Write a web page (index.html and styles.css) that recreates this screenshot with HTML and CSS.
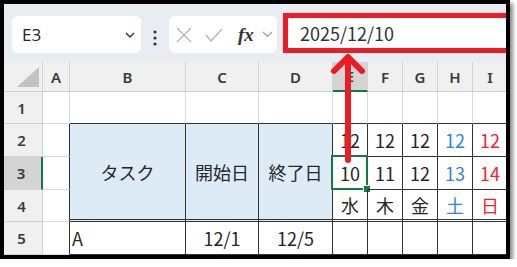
FILE: index.html
```html
<!DOCTYPE html>
<html lang="ja">
<head>
<meta charset="utf-8">
<link rel="stylesheet" href="styles.css">
</head>
<body>
<div class="frame">
  <div class="toolbar">
    <div class="namebox">
      <span class="ref">E3</span>
      <svg class="chev" width="10" height="6" viewBox="0 0 10 6"><polyline points="1,1 5,5 9,1" fill="none" stroke="#333" stroke-width="1.4"/></svg>
    </div>
    <svg class="dots" width="6" height="16" viewBox="0 0 6 16"><circle cx="3" cy="2" r="1.6" fill="#333"/><circle cx="3" cy="8" r="1.6" fill="#333"/><circle cx="3" cy="14" r="1.6" fill="#333"/></svg>
    <div class="fxbox">
      <svg class="ic" width="16" height="16" viewBox="0 0 16 16"><path d="M1 1 L15 15 M15 1 L1 15" stroke="#b4b4b4" stroke-width="1.3" fill="none"/></svg>
      <svg class="ic" width="18" height="16" viewBox="0 0 18 16"><polyline points="1,8 6,14 17,2" stroke="#b4b4b4" stroke-width="1.3" fill="none"/></svg>
      <span class="fx">fx</span>
      <svg class="chev2" width="11" height="7" viewBox="0 0 11 7"><polyline points="1,1 5.5,5.5 10,1" fill="none" stroke="#9a9a9a" stroke-width="1.2"/></svg>
    </div>
    <div class="formula">2025/12/10</div>
  </div>

  <div class="sheet">
    <div class="ch corner"><svg width="22" height="20" viewBox="0 0 22 20"><polygon points="0,20 22,20 22,0" fill="#c2c2c2"/></svg></div>
    <div class="ch">A</div>
    <div class="ch">B</div>
    <div class="ch">C</div>
    <div class="ch">D</div>
    <div class="ch selh">E</div>
    <div class="ch">F</div>
    <div class="ch">G</div>
    <div class="ch">H</div>
    <div class="ch">I</div>

    <div class="rh">1</div>
    <div class="c"></div>
    <div class="c top"></div>
    <div class="c top"></div>
    <div class="c top"></div>
    <div class="c top"></div>
    <div class="c top"></div>
    <div class="c top"></div>
    <div class="c top"></div>
    <div class="c top"></div>

    <div class="rh">2</div>
    <div class="c lft"></div>
    <div class="c t fill merge dbl">タスク</div>
    <div class="c t fill merge dbl">開始日</div>
    <div class="c t fill merge dbl">終了日</div>
    <div class="c t">12</div>
    <div class="c t">12</div>
    <div class="c t">12</div>
    <div class="c t sat">12</div>
    <div class="c t sun">12</div>

    <div class="rh selr">3</div>
    <div class="c lft"></div>
    <div class="c t active">10<span class="sel"><span class="handle"></span></span></div>
    <div class="c t">11</div>
    <div class="c t">12</div>
    <div class="c t sat">13</div>
    <div class="c t sun">14</div>

    <div class="rh">4</div>
    <div class="c lft"></div>
    <div class="c t dbl">水</div>
    <div class="c t dbl">木</div>
    <div class="c t dbl">金</div>
    <div class="c t dbl sat">土</div>
    <div class="c t dbl sun">日</div>

    <div class="rh">5</div>
    <div class="c lft"></div>
    <div class="c t left">A</div>
    <div class="c t">12/1</div>
    <div class="c t">12/5</div>
    <div class="c t"></div>
    <div class="c t"></div>
    <div class="c t"></div>
    <div class="c t"></div>
    <div class="c t"></div>
  </div>

  <svg class="arrow" width="502" height="251" viewBox="0 0 502 251">
    <g stroke="#ec1c24" stroke-width="6" stroke-linecap="round" stroke-linejoin="round" fill="none">
      <polyline points="330,67 344,53 358,67"/>
      <line x1="344" y1="55" x2="344" y2="156"/>
    </g>
  </svg>
</div>
</body>
</html>
```

FILE: styles.css
```css
html, body {
  margin: 0;
  padding: 0;
  background: #ffffff;
}

.frame {
  position: relative;
  width: 510px;
  height: 259px;
  box-sizing: border-box;
  border: 4px solid #000;
  box-shadow: 3px 3px 4px rgba(0, 0, 0, 0.45);
  overflow: hidden;
  background: #e9edf2;
}

.toolbar {
  height: 58px;
  box-sizing: border-box;
  display: flex;
  align-items: flex-start;
  padding: 9px 0 0 8px;
  white-space: nowrap;
}

.namebox {
  margin-top: 3px;
  width: 129px;
  height: 37px;
  box-sizing: border-box;
  background: #fff;
  border-radius: 6px;
  display: flex;
  align-items: center;
  justify-content: space-between;
  padding: 0 6px 0 10px;
  flex: none;
}

.ref {
  font-family: "Open Sans", "Noto Sans", sans-serif;
  font-size: 17px;
  color: #222;
}

.dots {
  margin: 17px 11px 0 11px;
  flex: none;
}

.fxbox {
  margin-top: 3px;
  width: 108px;
  height: 37px;
  box-sizing: border-box;
  background: #fff;
  border-radius: 6px;
  display: flex;
  align-items: center;
  padding: 0 0 0 7px;
  flex: none;
}

.fxbox .ic {
  margin-right: 13px;
}

.fx {
  font-family: "Liberation Serif", "DejaVu Serif", serif;
  font-style: italic;
  font-weight: bold;
  font-size: 19px;
  color: #333;
  margin-left: 2px;
}

.chev2 {
  margin-left: 8px;
}

.formula {
  margin-left: 6px;
  width: 260px;
  height: 40px;
  box-sizing: border-box;
  border: 5px solid #ec1c24;
  background: #fff;
  padding-left: 12px;
  font-family: "Noto Sans CJK JP", "Noto Sans", sans-serif;
  font-size: 18px;
  line-height: 30px;
  color: #333;
  flex: none;
}

.sheet {
  display: grid;
  grid-template-columns: 39px 27px 116px 73px 74px repeat(5, 35px);
  grid-template-rows: 30px 32px 33px 33px 32px 33px;
  width: 504px;
  background: #fff;
}

.sheet > div {
  box-sizing: border-box;
  display: flex;
  align-items: center;
  justify-content: center;
}

.ch,
.rh {
  background: #f0f0f0;
  border-right: 1px solid #d4d4d4;
  border-bottom: 1px solid #d0d0d0;
  font-family: "Noto Sans", "Open Sans", sans-serif;
  font-weight: 600;
  font-size: 15px;
  color: #3a3a3a;
}

.rh {
  padding-right: 3px;
}

.corner {
  justify-content: flex-end !important;
  align-items: flex-end !important;
  padding: 0 3px 4px 0;
}

.corner svg {
  display: block;
}

.selh {
  background: #d4d4d4;
  border-bottom: 2px solid #107c41;
}

.selr {
  background: #d4d4d4;
  border-right: 2px solid #107c41;
}

.c {
  position: relative;
  border-right: 1px solid #dadada;
  border-bottom: 1px solid #dadada;
  font-family: "Noto Sans CJK JP", sans-serif;
  font-size: 18px;
  color: #262626;
}

.c.top {
  border-bottom-color: #333;
}

.c.lft {
  border-right-color: #333;
}

.c.t {
  border-right-color: #333;
  border-bottom-color: #333;
}

.c.dbl {
  border-bottom: 3px double #333;
}

.fill {
  background: #ddebf7;
}

.merge {
  grid-row: span 3;
}

.left {
  justify-content: flex-start !important;
  padding-left: 2px;
}

.sat {
  color: #2f86d6;
}

.sun {
  color: #f5222d;
}

.sel {
  position: absolute;
  left: -2px;
  top: -2px;
  right: -1px;
  bottom: -1px;
  border: 2px solid #107c41;
}

.handle {
  position: absolute;
  right: -5px;
  bottom: -5px;
  width: 6px;
  height: 6px;
  background: #107c41;
  border: 1px solid #fff;
}

.arrow {
  position: absolute;
  left: 0;
  top: 0;
  pointer-events: none;
}
```
